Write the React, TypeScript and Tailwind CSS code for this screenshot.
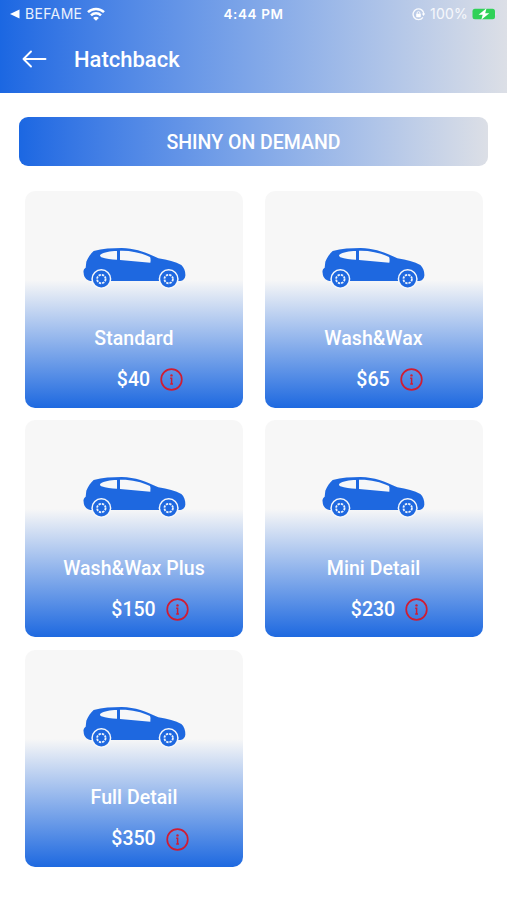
import { useState } from 'react'

interface Service {
  id: number
  name: string
  price: number
}

const services: Service[] = [
  { id: 1, name: 'Standard', price: 40 },
  { id: 2, name: 'Wash&Wax', price: 65 },
  { id: 3, name: 'Wash&Wax Plus', price: 150 },
  { id: 4, name: 'Mini Detail', price: 230 },
  { id: 5, name: 'Full Detail', price: 350 },
]

function Wheel({ cx }: { cx: number }) {
  return (
    <g>
      <circle cx={cx} cy={280} r={30} fill="#f6f8fb" />
      <circle cx={cx} cy={280} r={25.5} fill="#1e68e0" />
      <circle cx={cx} cy={280} r={12.7} fill="none" stroke="#edf3fc" strokeWidth={5.5} strokeDasharray="7 2.97" />
    </g>
  )
}

function CarIcon() {
  return (
    <svg width="103" height="41" viewBox="204 187 309 123">
      <path
        d="M236 196C262 189 292 187 320 187C362 188 392 200 430 218C458 222 482 229 499 238C507 245 512 258 511 270C510 279 505 284 496 286H226C212 283 206 272 206 262C204 255 207 249 212 246L214 228C219 216 227 204 236 196Z"
        fill="#1e68e0"
      />
      <path d="M256 207C267 200 285 196 306 196V222C290 222 272 220 259 215C255 212 254 210 256 207Z" fill="#f6f7f9" />
      <path d="M315 195C345 194 380 201 405 214Q408 220 406 231L315 223Z" fill="#f6f7f9" />
      <Wheel cx={259} />
      <Wheel cx={461} />
    </svg>
  )
}

function InfoIcon() {
  return (
    <svg width="23" height="23" viewBox="0 0 23 23" fill="none">
      <circle cx="11.5" cy="11.5" r="10.3" stroke="#d01c32" strokeWidth="1.7" />
      <circle cx="11.5" cy="7.4" r="1.2" fill="#d01c32" />
      <path d="M10.2 10.3h1.4v5.6M10.2 15.9h2.8" stroke="#d01c32" strokeWidth="1.5" />
    </svg>
  )
}

function StatusBar() {
  return (
    <div className="grid h-7 grid-cols-3 items-center px-2.5 font-['Inter'] text-[13.5px] leading-none text-white">
      <div className="flex items-center">
        <svg className="shrink-0" width="10" height="10" viewBox="0 0 10 10" fill="white">
          <path d="M0 5L9.5 .5v9z" />
        </svg>
        <span className="ml-[5px] text-[14px] font-normal tracking-[0.35px] text-white/90">BEFAME</span>
        <svg className="ml-[5px] shrink-0" width="18" height="14" viewBox="0 0 18 14" fill="none" stroke="white" strokeWidth="2.5">
          <path d="M1 5.2C5.4.8 12.6.8 17 5.2M4 8.4c2.8-2.8 7.2-2.8 10 0" />
          <path d="M6.1 10.9c1.6-1.6 4.2-1.6 5.8 0L9 13.8z" fill="white" stroke="none" />
        </svg>
      </div>
      <span className="pt-px text-center font-semibold tracking-[0.6px]">4:44 PM</span>
      <div className="flex items-center justify-end">
        <svg width="13" height="13" viewBox="0 0 13 13" fill="none" stroke="white" strokeOpacity=".9">
          <path d="M10.9 9.4A5.4 5.4 0 1 1 11.9 6.2" strokeWidth="1.4" />
          <path d="M9.8 5.6h3.2l-1.4 2.5z" fill="white" stroke="none" />
          <rect x="4.2" y="5.7" width="4.6" height="3.5" rx=".6" fill="white" stroke="none" />
          <path d="M5.1 6V5a1.4 1.4 0 0 1 2.8 0v1" strokeWidth="1" />
        </svg>
        <span className="ml-[5px] text-[14px] font-normal tracking-[0.2px] text-white/85">100%</span>
        <svg className="ml-1 shrink-0" width="25" height="12" viewBox="0 0 25 12">
          <rect x=".5" y=".8" width="22.5" height="10.4" rx="2.5" fill="#30d158" />
          <path d="M23.7 4q1.2 2 0 4z" fill="white" fillOpacity=".7" />
          <path d="M14.5 .3L6.5 6.7h4.2L9.3 11.7l8-6.5h-4.1z" fill="white" />
        </svg>
      </div>
    </div>
  )
}

function ServiceCard({ service, onSelect }: { service: Service; onSelect: () => void }) {
  return (
    <button
      onClick={onSelect}
      className="flex h-[217px] w-[218px] flex-col items-center rounded-[10px] bg-[linear-gradient(to_bottom,#f7f7f7_0%,#f7f7f7_41%,#1e69e0_100%)] pt-[57px] text-white"
    >
      <CarIcon />
      <span className="mt-[36.4px] text-[19.5px] leading-[28px] tracking-[0.05px]">{service.name}</span>
      <div className="mt-[13px] flex items-center gap-2.5 pl-8">
        <span className="text-[19.5px] leading-[28px]">${service.price}</span>
        <InfoIcon />
      </div>
    </button>
  )
}

export default function App() {
  const [, setSelected] = useState<number | null>(null)

  return (
    <div className="h-[900px] w-[507px] overflow-hidden bg-white font-['Roboto',sans-serif] font-medium">
      {/* Header */}
      <header className="h-[92.5px] bg-linear-to-r from-[#1b67e2] to-[#dcdfe6] text-white">
        <StatusBar />
        <div className="flex h-[62px] items-center pl-[22px]">
          <button aria-label="Back">
            <svg width="25" height="18" viewBox="0 0 25 18" fill="none" stroke="white" strokeWidth="1.9" strokeLinecap="round" strokeLinejoin="round">
              <path d="M9 1.5L1.5 9 9 16.5M1.5 9H23.5" />
            </svg>
          </button>
          <h1 className="ml-[27px] pt-px text-[22px] leading-7">Hatchback</h1>
        </div>
      </header>

      {/* Banner */}
      <div className="mx-[19px] mt-[24.5px] flex h-[49px] items-center justify-center rounded-[9px] bg-linear-to-r from-[#1b67e2] to-[#dcdfe6] pt-0.5 text-[19.5px] text-white">
        SHINY ON DEMAND
      </div>

      {/* Services */}
      <div className="ml-[25px] mt-[24.5px] grid grid-cols-[218px_218px] gap-x-[21.5px] gap-y-[12.8px]">
        {services.map((service) => (
          <ServiceCard key={service.id} service={service} onSelect={() => setSelected(service.id)} />
        ))}
      </div>
    </div>
  )
}
